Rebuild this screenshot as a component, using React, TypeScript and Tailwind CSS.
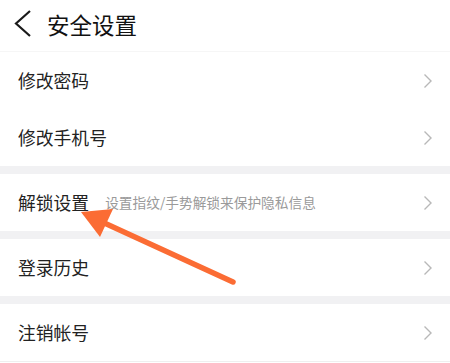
import React from "react";

const Chevron = () => (
  <svg width="10" height="16" viewBox="0 0 10 16" className="shrink-0">
    <path d="M1.5 1.5 L8 8 L1.5 14.5" fill="none" stroke="#b8b8b8" strokeWidth="1.4" />
  </svg>
);

function Row({ title, sub }: { title: string; sub?: string }) {
  return (
    <div className="h-[57px] flex items-center pl-[18px] pr-[17px] bg-white">
      <span className="text-[17.8px] text-[#222] leading-none">{title}</span>
      {sub && <span className="ml-[16px] text-[13.7px] text-[#9a9a9a] leading-none">{sub}</span>}
      <span className="flex-1" />
      <Chevron />
    </div>
  );
}

const Band = () => <div className="h-[8px] bg-[#f1f1f3]" />;

export default function App() {
  return (
    <div
      className="relative w-[450px] h-[363px] bg-white overflow-hidden"
      style={{ fontFamily: '"Noto Sans CJK SC", "Noto Sans", sans-serif' }}
    >
      <div className="h-[52px] flex items-center border-b border-[#f6f6f6]">
        <svg width="20" height="30" viewBox="0 0 20 30" className="ml-[12px] -mt-[3px]">
          <path d="M18 2 L4 14.5 L18 27" fill="none" stroke="#1a1a1a" strokeWidth="2.2" />
        </svg>
        <span className="ml-[15px] text-[22.5px] text-[#111] leading-none -mt-[3px]">安全设置</span>
      </div>
      <Row title="修改密码" />
      <Row title="修改手机号" />
      <Band />
      <Row title="解锁设置" sub="设置指纹/手势解锁来保护隐私信息" />
      <Band />
      <Row title="登录历史" />
      <Band />
      <Row title="注销帐号" />
      <div className="h-px bg-[#efefef]" />

      <svg className="absolute left-0 top-0 pointer-events-none" width="450" height="363" viewBox="0 0 450 363">
        <line x1="233" y1="282" x2="100" y2="221" stroke="#fb6c34" strokeWidth="5.5" strokeLinecap="round" />
        <polygon points="81,212 113,209 100,237" fill="#fb6c34" />
      </svg>
    </div>
  );
}
